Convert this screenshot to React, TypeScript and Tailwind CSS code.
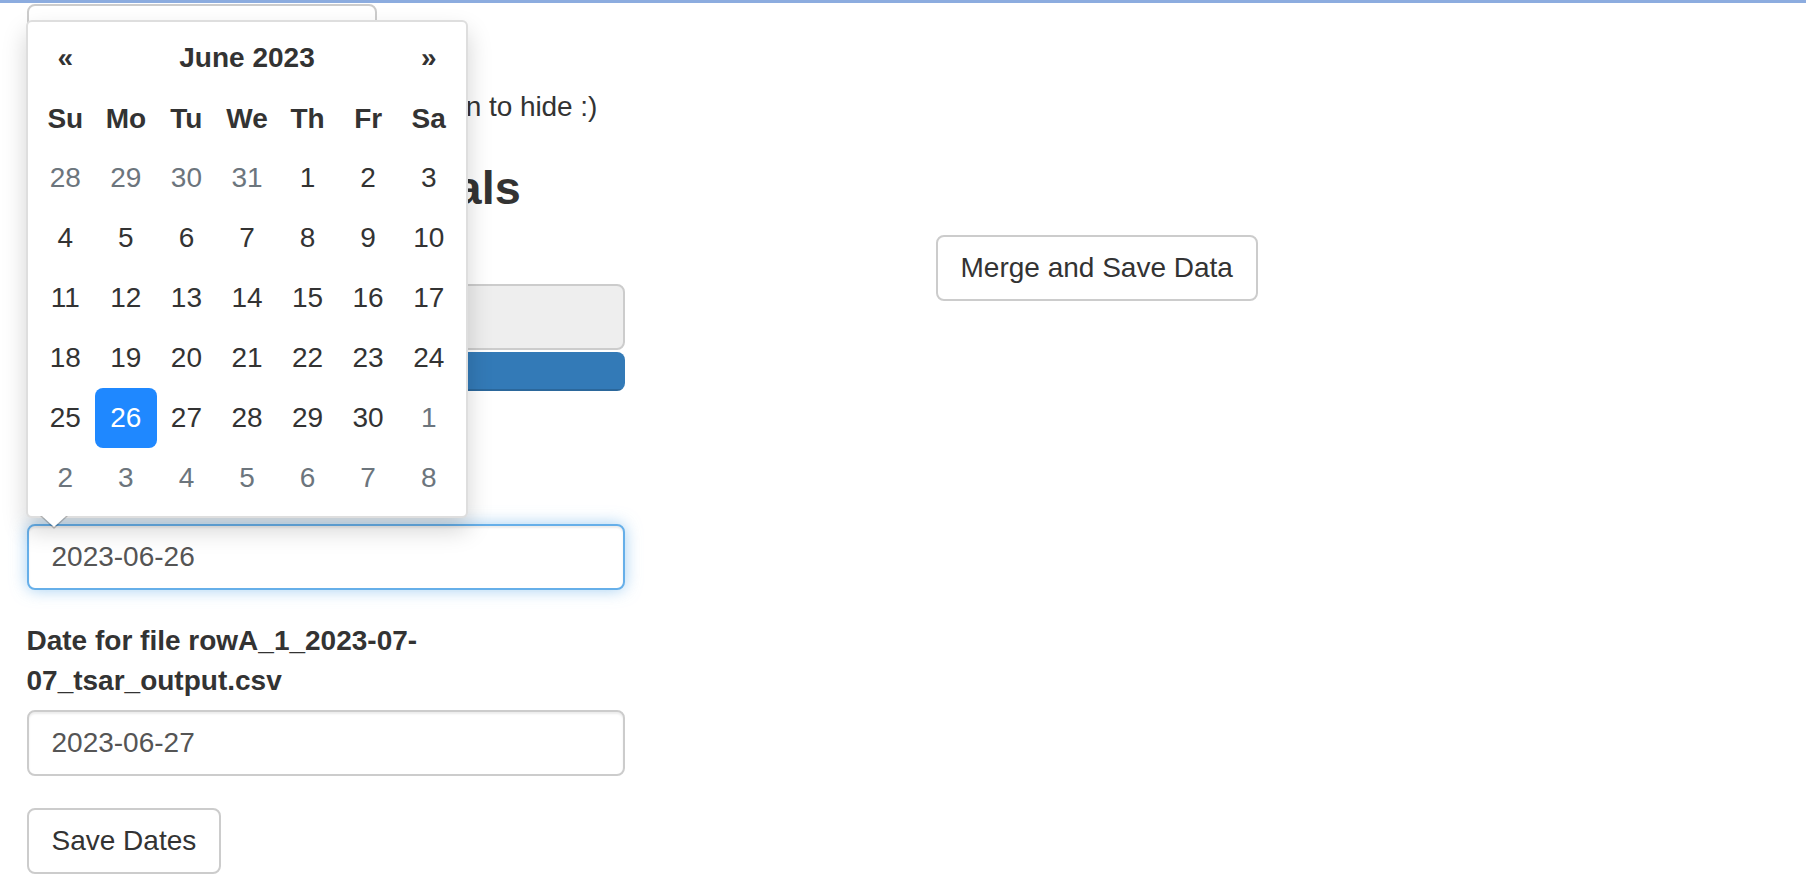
import React from "react";

const weekDays = ["Su", "Mo", "Tu", "We", "Th", "Fr", "Sa"];

// June 2023 as the datepicker shows it, six rows with May and July overflow
const days: { n: number; muted?: boolean; active?: boolean }[] = [
  ...[28, 29, 30, 31].map((n) => ({ n, muted: true })),
  ...Array.from({ length: 30 }, (_, i) => ({ n: i + 1, active: i + 1 === 26 })),
  ...[1, 2, 3, 4, 5, 6, 7, 8].map((n) => ({ n, muted: true })),
];

function DatePicker() {
  return (
    <div className="absolute left-[26px] top-[19.6px] z-20 w-[442px] rounded-[6px] border-2 border-[rgba(0,0,0,0.13)] bg-white px-[7px] pt-[6px] pb-[8px] shadow-[0_12px_24px_rgba(0,0,0,0.175)]">
      <div className="grid grid-cols-7 text-[28px] leading-none">
        <div className="flex h-[60px] items-center justify-center font-bold">«</div>
        <div className="col-span-5 flex h-[60px] items-center justify-center font-bold">June 2023</div>
        <div className="flex h-[60px] items-center justify-center font-bold">»</div>

        {weekDays.map((d) => (
          <div key={d} className="flex h-[60px] items-center justify-center pt-[2px] font-bold">
            {d}
          </div>
        ))}

        {days.map((d, i) => (
          <div
            key={i}
            className={
              d.active
                ? "-mx-[1px] flex h-[60px] items-center justify-center rounded-[8px] bg-[#1f88ff] text-white"
                : d.muted
                ? "flex h-[60px] items-center justify-center text-[#6c757d]"
                : "flex h-[60px] items-center justify-center"
            }
          >
            {d.n}
          </div>
        ))}
      </div>

      {/* little arrow pointing at the focused input */}
      <div className="absolute left-[12px] top-full h-0 w-0 border-x-[14px] border-t-[13px] border-x-transparent border-t-[rgba(0,0,0,0.2)]" />
      <div className="absolute left-[14px] top-full h-0 w-0 border-x-[12px] border-t-[11px] border-x-transparent border-t-white" />
    </div>
  );
}

export default function App() {
  return (
    <div className="relative h-[894px] w-[1806px] overflow-hidden bg-white font-['Liberation_Sans',Arial,sans-serif] text-[28px] leading-[40px] text-[#333]">
      <div className="h-[3px] bg-[#8cacdf]" />

      <DatePicker />

      <div className="flex">
        {/* Left column */}
        <div className="ml-[26.5px] flex w-[598px] flex-col">
          <button className="mt-[1px] h-[66px] w-[350px] rounded-[8px] border-2 border-[#ccc] bg-white px-[23px]">
            Show instructions
          </button>

          <p className="mt-[17px] whitespace-nowrap tracking-[-0.05px]">Tip: click on the date calendar button to hide :)</p>

          <h3 className="mt-[36px] whitespace-nowrap text-[46.8px] font-bold leading-[51px]">Set Dates for Intervals</h3>

          <label className="mt-[19px] font-bold">Upload tsar output files</label>

          <div className="mt-[11px] flex h-[66px]">
            <span className="flex items-center rounded-l-[8px] border-2 border-[#ccc] bg-white px-[23px]">Browse...</span>
            <div className="-ml-[2px] flex flex-1 items-center rounded-r-[8px] border-2 border-[#ccc] bg-[#eee] px-[23px] text-[#555]">
              2 files
            </div>
          </div>

          <div className="mt-[2px] h-[38.6px] overflow-hidden rounded-[8px] bg-[#f5f5f5]">
            <div className="flex h-full w-full items-center justify-center bg-[#337ab7] text-[23px] text-white shadow-[inset_0_-2px_0_rgba(0,0,0,0.15)]">
              Upload complete
            </div>
          </div>

          <label className="mt-[44px] font-bold">Date for file rowA_1_2023-07-06_tsar_output.csv</label>
          <input
            readOnly
            value="2023-06-26"
            className="mt-[9px] h-[66px] rounded-[8px] border-2 border-[#66afe9] bg-white px-[23px] text-[#555] shadow-[inset_0_2px_2px_rgba(0,0,0,0.075),0_0_16px_rgba(102,175,233,0.6)] outline-none"
          />

          <label className="mt-[31px] font-bold">Date for file rowA_1_2023-07-07_tsar_output.csv</label>
          <input
            readOnly
            value="2023-06-27"
            className="mt-[9px] h-[66px] rounded-[8px] border-2 border-[#ccc] bg-white px-[23px] text-[#555] shadow-[inset_0_2px_2px_rgba(0,0,0,0.075)] outline-none"
          />

          <div className="mt-[32px]">
            <button className="h-[66px] rounded-[8px] border-2 border-[#ccc] bg-white px-[23px]">Save Dates</button>
          </div>
        </div>

        {/* Right column */}
        <div className="ml-[311px] pt-[232px]">
          <button className="h-[66px] rounded-[8px] border-2 border-[#ccc] bg-white px-[23px]">Merge and Save Data</button>
        </div>
      </div>
    </div>
  );
}
